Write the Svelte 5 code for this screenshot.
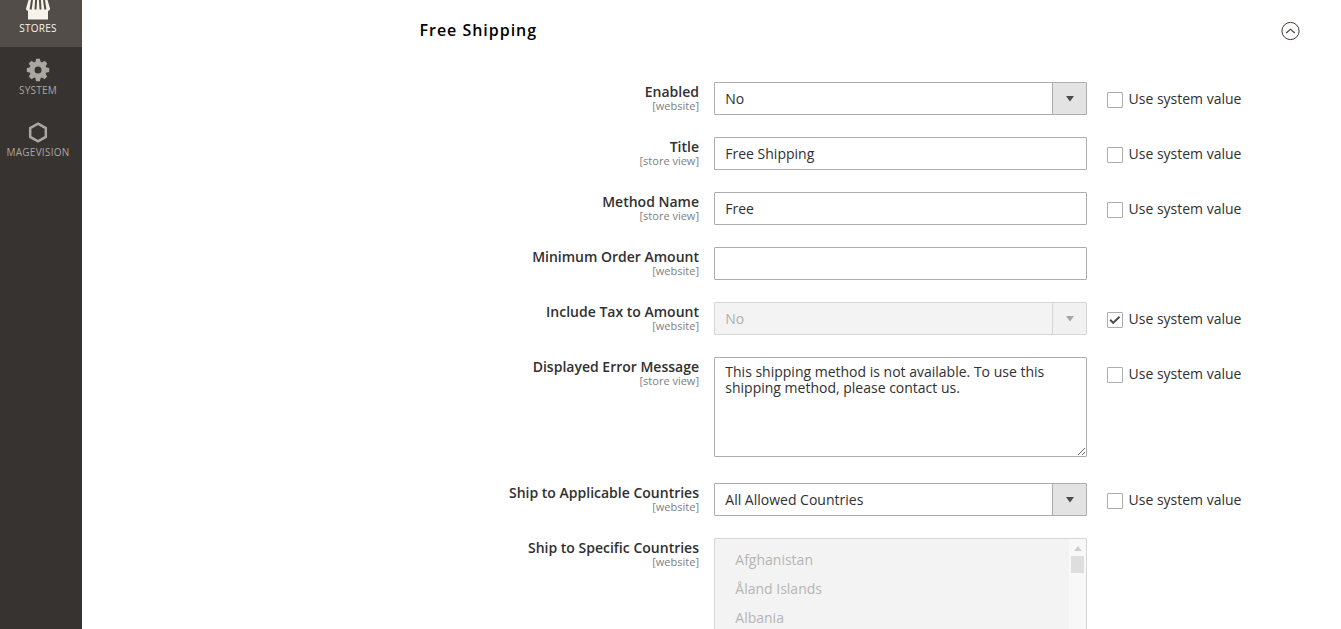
<script>
    const fields = [
        { id: 'active', label: 'Enabled', scope: 'website', type: 'select', value: 'No', inherit: false },
        { id: 'title', label: 'Title', scope: 'store view', type: 'text', value: 'Free Shipping', inherit: false },
        { id: 'name', label: 'Method Name', scope: 'store view', type: 'text', value: 'Free', inherit: false },
        { id: 'minimum', label: 'Minimum Order Amount', scope: 'website', type: 'text', value: '' },
        { id: 'tax', label: 'Include Tax to Amount', scope: 'website', type: 'select', value: 'No', inherit: true },
        { id: 'error', label: 'Displayed Error Message', scope: 'store view', type: 'textarea', value: 'This shipping method is not available. To use this shipping method, please contact us.', inherit: false },
        { id: 'allow', label: 'Ship to Applicable Countries', scope: 'website', type: 'select', value: 'All Allowed Countries', inherit: false },
        { id: 'countries', label: 'Ship to Specific Countries', scope: 'website', type: 'list', value: ['Afghanistan', 'Åland Islands', 'Albania'] },
    ];
    const teeth = [0, 45, 90, 135, 180, 225, 270, 315];
    let open = true;
</script>

<div class="page">
    <nav>
        <a class="stores active" href="#stores">
            <svg width="26" height="20" viewBox="0 0 26 20">
                <path fill="#f7f3eb" d="M3.500 0h19L25 8.500c0 1.500-1 2.300-2 2.300v8.700H3v-8.700c-1 0-2-.8-2-2.300z" />
                <path stroke="#524d49" stroke-width="2" fill="none" d="M7 0L5.600 9.500M11.100 0l-.6 9.500M14.900 0l.6 9.500M19 0l1.400 9.500" />
            </svg>
            <span>STORES</span>
        </a>
        <a href="#system">
            <svg width="24" height="24" viewBox="-12 -12 24 24">
                <circle r="6" fill="none" stroke="#aaa6a0" stroke-width="5" />
                {#each teeth as angle}
                    <path fill="#aaa6a0" transform="rotate({angle})" d="M-2.800-7.500L-1.900-11.200H1.900L2.800-7.500z" />
                {/each}
            </svg>
            <span>SYSTEM</span>
        </a>
        <a href="#magevision">
            <svg width="24" height="24" viewBox="-12 -12 24 24">
                <path fill="none" stroke="#aaa6a0" stroke-width="2.500" d="M0-8.300l7.800 4.400v8.800L0 9.300l-7.800-4.400v-8.800z" />
            </svg>
            <span>MAGEVISION</span>
        </a>
    </nav>

    <main>
        <header>
            <h1>Free Shipping</h1>
            <button aria-label="Toggle section" on:click={() => (open = !open)}>
                <svg width="20" height="20" viewBox="0 0 20 20" fill="none" stroke="#41362f">
                    <circle cx="10.500" cy="10" r="8.600" stroke-width="1" />
                    <path stroke-width="1.100" d="M6.300 12l4.200-3.800 4.200 3.800" />
                </svg>
            </button>
        </header>

        {#if open}
            <form>
                {#each fields as field}
                    <div class="field">
                        <div class="name">
                            <label for={field.id}>{field.label}</label>
                            <small>[{field.scope}]</small>
                        </div>

                        {#if field.type === 'select'}
                            <div class="select" class:disabled={field.inherit}>
                                <select id={field.id} disabled={field.inherit}>
                                    <option>{field.value}</option>
                                </select>
                                <svg width="8" height="6" viewBox="0 0 8 6"><path d="M0 0h8L4 5.500z" /></svg>
                            </div>
                        {:else if field.type === 'textarea'}
                            <textarea id={field.id} spellcheck="false" value={field.value}></textarea>
                        {:else if field.type === 'list'}
                            <div class="list" id={field.id}>
                                <ul>
                                    {#each field.value as country}
                                        <li>{country}</li>
                                    {/each}
                                </ul>
                                <div class="scroll">
                                    <svg width="8" height="5" viewBox="0 0 8 5"><path d="M0 5L4 0l4 5z" /></svg>
                                    <i></i>
                                </div>
                            </div>
                        {:else}
                            <input class="text" type="text" id={field.id} value={field.value} />
                        {/if}

                        {#if field.inherit !== undefined}
                            <label class="inherit">
                                <input type="checkbox" checked={field.inherit} />
                                <span class="box">
                                    <svg width="12" height="10" viewBox="0 0 12 10"><path d="M1.200 4.800l3 3.100 6.300-6.200" /></svg>
                                </span>
                                Use system value
                            </label>
                        {/if}
                    </div>
                {/each}
            </form>
        {/if}
    </main>
</div>

<style>
    :global(body){
        overflow: hidden;
        background: #fff;
    }

    .page{
        display: flex;
        height: 629px;
        overflow: hidden;
        font-family: "Open Sans", "Noto Sans", sans-serif;
        font-size: 14px;
        color: #303030;
    }

    nav{
        width: 82px;
        flex: none;
        background: #373330;
    }

    nav a{
        display: flex;
        flex-direction: column;
        align-items: center;
        box-sizing: border-box;
        height: 62px;
        padding: 11px 6px 0 0;
        color: #aaa6a0;
        font-size: 10px;
        letter-spacing: 0.25px;
        line-height: 14px;
        text-decoration: none;
    }

    nav a svg{
        flex: none;
    }

    nav a span{
        margin-top: 1px;
    }

    nav a.active{
        height: 47px;
        padding-top: 0;
        background: #524d49;
        color: #f7f3eb;
    }

    main{
        flex: 1;
    }

    header{
        display: flex;
        justify-content: space-between;
        align-items: center;
        height: 62px;
        padding: 0 41px 0 337.5px;
    }

    h1{
        margin: 0 0 2px;
        font-size: 16px;
        font-weight: 550;
        letter-spacing: 0.98px;
        color: #000;
    }

    button{
        width: 20px;
        height: 20px;
        padding: 0;
        border: 0;
        background: none;
    }

    button svg{
        display: block;
    }

    form{
        display: flex;
        flex-direction: column;
        gap: 22px;
        padding-top: 20px;
    }

    .field{
        display: grid;
        grid-template-columns: 617px 388px auto;
        align-items: start;
        justify-content: start;
    }

    .name{
        padding-top: 1px;
        font-weight: 570;
        line-height: 17px;
        text-align: right;
    }

    .name label{
        display: block;
    }

    .name small{
        display: block;
        font-size: 11px;
        font-weight: 400;
        line-height: 11px;
        color: #808080;
    }

    .select, .text, textarea, .list{
        box-sizing: border-box;
        width: 373px;
        margin: 0 0 0 15px;
        border: 1px solid #adadad;
        border-radius: 1px;
        background: #fff;
    }

    .select, .text{
        height: 33px;
    }

    .text, textarea, select{
        font: inherit;
        color: #303030;
        outline: none;
    }

    .text{
        padding: 0 10.3px;
    }

    textarea{
        display: block;
        height: 100px;
        margin-bottom: 4px;
        padding: 6px 10.3px;
        line-height: 16px;
        resize: both;
    }

    .select{
        display: grid;
        grid-template-columns: 1fr 33px;
        align-items: center;
    }

    .select select{
        appearance: none;
        grid-area: 1 / 1 / 2 / 3;
        width: 100%;
        height: 31px;
        padding: 0 10.3px;
        border: 0;
        background: linear-gradient(to left, #e3e3e3 33px, #adadad 33px, #adadad 34px, #fff 34px);
        opacity: 1;
    }

    .select svg{
        grid-area: 1 / 2;
        justify-self: center;
        fill: #514943;
        margin-top: 1px;
        margin-right: 0;
    }

    .disabled{
        border-color: #d6d6d6;
    }

    .disabled select{
        background: linear-gradient(to left, #f1f1f1 33px, #d6d6d6 33px, #d6d6d6 34px, #f3f3f3 34px);
        color: #afafaf;
    }

    .disabled svg{
        fill: #aaa5a1;
    }

    .inherit{
        display: flex;
        align-items: center;
        height: 33px;
        margin-left: 20px;
        gap: 5.5px;
        white-space: nowrap;
    }

    .inherit input{
        position: absolute;
        opacity: 0;
    }

    .box{
        display: flex;
        align-items: center;
        justify-content: center;
        box-sizing: border-box;
        width: 16px;
        height: 16px;
        margin-top: 3px;
        border: 1px solid #adadad;
        border-radius: 1px;
    }

    .box svg{
        display: none;
        fill: none;
        stroke: #514943;
        stroke-width: 2;
    }

    input:checked + .box svg{
        display: block;
    }

    .list{
        display: flex;
        justify-content: space-between;
        height: 150px;
        border-color: #d6d6d6;
        background: #f3f3f3;
        color: #b5b5b5;
    }

    ul{
        margin: 0;
        padding: 6px 20.3px;
        list-style: none;
    }

    li{
        height: 29px;
        line-height: 29px;
    }

    .scroll{
        display: flex;
        flex-direction: column;
        align-items: center;
        width: 17px;
        background: #f8f8f8;
    }

    .scroll svg{
        margin-top: 7px;
        fill: #cfcfcf;
    }

    .scroll i{
        width: 13px;
        height: 17px;
        margin-top: 5px;
        background: #dedede;
    }
</style>
